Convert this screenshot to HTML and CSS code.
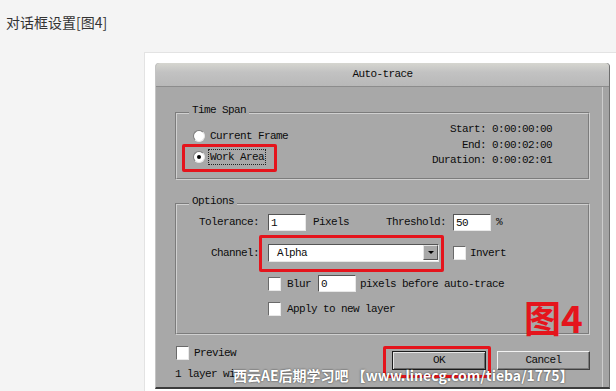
FILE: index.html
```html
<!DOCTYPE html>
<html lang="zh-CN">
<head>
    <meta charset="UTF-8">
    <meta name="viewport" content="width=device-width, initial-scale=1.0">
    <title>对话框设置</title>
    <link rel="stylesheet" href="styles.css">
</head>
<body>
    <p class="caption">对话框设置[图4]</p>

    <div class="figure">
        <div class="dialog">
            <div class="titlebar">Auto-trace</div>

            <div class="dialog-body">
                <fieldset class="group group-time">
                    <legend>Time Span</legend>
                    <div class="time-cols">
                        <div class="radios">
                            <div class="radio-row"><span class="radio"></span><span>Current Frame</span></div>
                            <div class="radio-row marked mark-work"><span class="radio checked"></span><span class="focus">Work Area</span></div>
                        </div>
                        <div class="times">
                            <div>Start: 0:00:00:00</div>
                            <div>End: 0:00:02:00</div>
                            <div>Duration: 0:00:02:01</div>
                        </div>
                    </div>
                </fieldset>

                <fieldset class="group group-options">
                    <legend>Options</legend>
                    <div class="opt-row row-1">
                        <span class="opt-label">Tolerance:</span>
                        <span class="field field-short">1</span>
                        <span class="after">Pixels</span>
                        <span class="threshold-label">Threshold:</span>
                        <span class="field field-short">50</span>
                        <span class="pct">%</span>
                    </div>
                    <div class="opt-row row-2">
                        <span class="opt-label">Channel:</span>
                        <div class="select marked mark-channel">
                            <span class="select-value">Alpha</span>
                            <span class="select-btn"></span>
                        </div>
                        <span class="check check-invert"></span>
                        <span class="check-text">Invert</span>
                    </div>
                    <div class="opt-row row-3">
                        <span class="opt-label"></span>
                        <span class="check"></span>
                        <span class="check-text">Blur</span>
                        <span class="field field-blur">0</span>
                        <span class="after-blur">pixels before auto-trace</span>
                    </div>
                    <div class="opt-row row-4">
                        <span class="opt-label"></span>
                        <span class="check"></span>
                        <span class="check-text">Apply to new layer</span>
                    </div>
                </fieldset>

                <div class="dialog-foot">
                    <div class="foot-left">
                        <div class="preview-row"><span class="check"></span><span class="check-text">Preview</span></div>
                        <div class="status">1 layer wi</div>
                    </div>
                    <div class="buttons">
                        <button class="btn btn-default marked mark-ok">OK</button>
                        <button class="btn">Cancel</button>
                    </div>
                </div>
            </div>

            <!-- annotations painted on the screenshot -->
            <div class="fig-number">图4</div>
            <div class="watermark">西云AE后期学习吧 【www.linecg.com/tieba/1775】</div>
        </div>
    </div>
</body>
</html>
```

FILE: styles.css
```css
/* Page */
body {
    margin: 0;
    padding: 12px 0 0 6px;
    background: #f4f4f4;
    font-family: "Noto Sans CJK SC", sans-serif;
    overflow: hidden;
}
.caption {
    margin: 0;
    font-size: 14px;
    line-height: 20px;
    color: #333;
}
.figure {
    margin: 20px 0 0 138px;
    width: 480px;
    padding: 10px;
    background: #fff;
    border: 1px solid #e3e3e3;
}

/* Dialog window */
.dialog {
    position: relative;
    width: 455px;
    height: 326px;
    box-sizing: border-box;
    background: #a8a8a8;
    border-left: 1px solid #c4c4c4;
    border-right: 1px solid #6e6e6e;
    border-bottom: 2px solid #3c3c3c;
    border-radius: 4px 4px 0 0;
    box-shadow: inset -6px 0 0 #a4a4a4, inset -7px 0 0 #cdcdcd;
    font-family: "Liberation Mono", monospace;
    font-size: 11px;
    letter-spacing: -0.6px;
    color: #0c0c0c;
}
.titlebar {
    height: 23px;
    line-height: 23px;
    text-align: center;
    background: linear-gradient(#d6d6d0, #c2c2c2 40%, #b8b8b8);
    border-bottom: 1px solid #8c8c8c;
    border-radius: 4px 4px 0 0;
}
.dialog-body {
    padding-top: 17px;
}

/* Group boxes */
.group {
    margin: 0 19px;
    padding: 0;
    min-width: 0;
    border: 2px groove #d0d0d0;
}
.group legend {
    margin-left: 12px;
    padding: 0 3px 6px;
    line-height: 12px;
}
.group-time {
    padding-bottom: 9px;
}
.group-options {
    margin-top: 15px;
    padding-bottom: 15px;
}

/* Time span */
.time-cols {
    display: flex;
    justify-content: space-between;
}
.radios {
    padding: 3px 0 0 16px;
}
.radio-row {
    display: flex;
    align-items: center;
    height: 21px;
}
.radio {
    width: 10px;
    height: 10px;
    margin-right: 5px;
    border-radius: 50%;
    background: #fff;
    border: 1px solid #7a7a7a;
    border-right-color: #e6e6e6;
    border-bottom-color: #e6e6e6;
    position: relative;
}
.radio.checked::after {
    content: "";
    position: absolute;
    left: 3px;
    top: 3px;
    width: 4px;
    height: 4px;
    border-radius: 50%;
    background: #000;
}
.focus {
    outline: 1px dotted #222;
    outline-offset: 1px;
}
.times {
    padding-right: 36px;
    text-align: right;
    line-height: 15.5px;
}

/* Options */
.opt-row {
    display: flex;
    align-items: center;
}
.row-1 { height: 19px; }
.row-2 { height: 20px; margin-top: 11px; }
.row-3 { height: 18px; margin-top: 12px; }
.row-4 { height: 17px; margin-top: 8px; }
.opt-label {
    width: 82px;
    margin-right: 9px;
    text-align: right;
    flex: none;
}
.field {
    height: 17px;
    box-sizing: border-box;
    padding: 1px 2px 0;
    line-height: 15px;
    background: #fff;
    border-top: 1px solid #555;
    border-left: 1px solid #555;
    border-right: 1px solid #e8e8e8;
    border-bottom: 1px solid #e8e8e8;
}
.field-short { width: 38px; }
.field-blur { width: 38px; margin-left: 7px; }
.after { margin-left: 7px; }
.threshold-label { margin-left: 37px; }
.row-1 .threshold-label + .field { margin-left: 7px; }
.pct { margin-left: 5px; }
.after-blur { margin-left: 4px; }

.select {
    width: 171px;
    height: 18px;
    box-sizing: border-box;
    display: flex;
    align-items: center;
    justify-content: space-between;
    background: #fff;
    border-top: 1px solid #555;
    border-left: 1px solid #555;
    border-right: 1px solid #e8e8e8;
    border-bottom: 1px solid #e8e8e8;
    padding-left: 8px;
}
.select-btn {
    width: 15px;
    height: 15px;
    box-sizing: border-box;
    background: #a8a8a8;
    border: 1px solid #e4e4e4;
    border-right-color: #555;
    border-bottom-color: #555;
    position: relative;
}
.select-btn::after {
    content: "";
    position: absolute;
    left: 4px;
    top: 5px;
    border-left: 3px solid transparent;
    border-right: 3px solid transparent;
    border-top: 3px solid #000;
}

.check {
    width: 13px;
    height: 14px;
    box-sizing: border-box;
    flex: none;
    background: #fff;
    border-top: 1px solid #6a6a6a;
    border-left: 1px solid #6a6a6a;
    border-right: 1px solid #e8e8e8;
    border-bottom: 1px solid #e8e8e8;
}
.check-text { margin-left: 6px; }
.check-invert { margin-left: 14px; }
.row-2 .check-text { margin-left: 4px; }

/* Footer */
.dialog-foot {
    display: flex;
    justify-content: space-between;
    align-items: flex-start;
    padding: 10px 19px 0 20px;
}
.preview-row {
    display: flex;
    align-items: center;
    height: 16px;
}
.preview-row .check-text { margin-left: 5px; }
.status {
    margin: 5px 0 0 -1px;
    line-height: 16px;
}
.buttons {
    display: flex;
    gap: 11px;
    margin-top: 6px;
}
.btn {
    width: 93px;
    height: 19px;
    padding: 0;
    font: inherit;
    letter-spacing: inherit;
    line-height: 11px;
    color: #0c0c0c;
    background: #acacac;
    border: 1px solid;
    border-color: #f2f2f2 #404040 #404040 #f2f2f2;
    box-shadow: inset -1px -1px 0 #7c7c7c;
}
.btn-default {
    width: 94px;
    border-color: #1c1c1c;
    box-shadow: inset 1px 1px 0 #e6e6e6, inset -1px -1px 0 #6a6a6a;
}

/* Red marks drawn over the screenshot */
.marked {
    position: relative;
}
.marked::before {
    content: "";
    position: absolute;
    border: 3px solid #e5141c;
    border-radius: 2px;
    pointer-events: none;
}
.mark-work::before {
    left: -11px;
    top: -2px;
    width: 89px;
    height: 22px;
}
.mark-channel::before {
    left: -10px;
    top: -10px;
    right: -6px;
    bottom: -11px;
}
.mark-ok::before {
    left: -10px;
    top: -6px;
    right: -6px;
    bottom: -9px;
}
.fig-number {
    position: absolute;
    left: 368px;
    top: 236px;
    font-family: "Noto Sans CJK SC", sans-serif;
    font-size: 37px;
    line-height: 37px;
    font-weight: bold;
    letter-spacing: 0;
    color: #e5141c;
}
.watermark {
    position: absolute;
    left: 77px;
    top: 305px;
    font-family: "Noto Sans CJK SC", sans-serif;
    font-size: 14px;
    line-height: 14px;
    font-weight: bold;
    letter-spacing: 0;
    white-space: nowrap;
    color: #fff;
    text-shadow: 0 0 2px rgba(0, 0, 0, 0.7);
}
```
